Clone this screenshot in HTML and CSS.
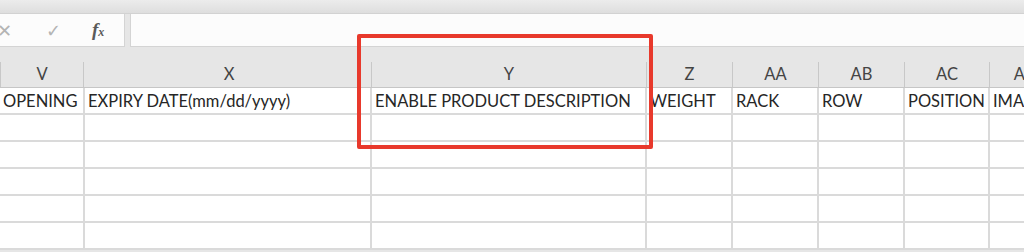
FILE: index.html
```html
<!DOCTYPE html>
<html lang="en">
<head>
    <meta charset="UTF-8">
    <title>Sheet</title>
    <link rel="stylesheet" href="styles.css">
</head>
<body>
    <div class="ribbon-edge"></div>

    <div class="formula-bar">
        <div class="fx-box">
            <span class="fx-icon cancel">&#x2715;</span>
            <span class="fx-icon enter">&#x2713;</span>
            <span class="fx-icon fx"><i>f</i><small>x</small></span>
        </div>
        <div class="fx-input"></div>
    </div>

    <div class="sheet">
        <div class="row head">
            <div class="cell c-v">V</div>
            <div class="cell c-x">X</div>
            <div class="cell c-y">Y</div>
            <div class="cell c-z">Z</div>
            <div class="cell c-aa">AA</div>
            <div class="cell c-ab">AB</div>
            <div class="cell c-ac">AC</div>
            <div class="cell c-ad">AD</div>
        </div>
        <div class="row">
            <div class="cell c-v">OPENING</div>
            <div class="cell c-x">EXPIRY DATE(mm/dd/yyyy)</div>
            <div class="cell c-y">ENABLE PRODUCT DESCRIPTION</div>
            <div class="cell c-z">WEIGHT</div>
            <div class="cell c-aa">RACK</div>
            <div class="cell c-ab">ROW</div>
            <div class="cell c-ac">POSITION</div>
            <div class="cell c-ad">IMAGE</div>
        </div>
        <div class="row"><div class="cell c-v"></div><div class="cell c-x"></div><div class="cell c-y"></div><div class="cell c-z"></div><div class="cell c-aa"></div><div class="cell c-ab"></div><div class="cell c-ac"></div><div class="cell c-ad"></div></div>
        <div class="row"><div class="cell c-v"></div><div class="cell c-x"></div><div class="cell c-y"></div><div class="cell c-z"></div><div class="cell c-aa"></div><div class="cell c-ab"></div><div class="cell c-ac"></div><div class="cell c-ad"></div></div>
        <div class="row"><div class="cell c-v"></div><div class="cell c-x"></div><div class="cell c-y"></div><div class="cell c-z"></div><div class="cell c-aa"></div><div class="cell c-ab"></div><div class="cell c-ac"></div><div class="cell c-ad"></div></div>
        <div class="row"><div class="cell c-v"></div><div class="cell c-x"></div><div class="cell c-y"></div><div class="cell c-z"></div><div class="cell c-aa"></div><div class="cell c-ab"></div><div class="cell c-ac"></div><div class="cell c-ad"></div></div>
        <div class="row"><div class="cell c-v"></div><div class="cell c-x"></div><div class="cell c-y"></div><div class="cell c-z"></div><div class="cell c-aa"></div><div class="cell c-ab"></div><div class="cell c-ac"></div><div class="cell c-ad"></div></div>
    </div>

    <!-- highlight around column Y -->
    <div class="highlight"></div>
</body>
</html>
```

FILE: styles.css
```css
* {
    margin: 0;
    padding: 0;
    box-sizing: border-box;
}

body {
    font-family: Lato, "Open Sans", sans-serif;
    background-color: #e6e6e6;
    width: 1024px;
    height: 252px;
    overflow: hidden;
    position: relative;
}

.ribbon-edge {
    height: 14px;
    background: linear-gradient(#ececec, #dedede);
    border-bottom: 1px solid #d2d2d2;
}

.formula-bar {
    display: flex;
    gap: 5px;
    height: 33px;
    background-color: #e6e6e6;
}

.fx-box {
    width: 125px;
    display: flex;
    align-items: center;
    background-color: #fcfcfc;
    border: 1px solid #d4d4d4;
    border-left: none;
    border-top: none;
}

.fx-icon {
    color: #b4b4b4;
    font-size: 18px;
}

.cancel {
    margin-left: -3px;
}

.enter {
    margin-left: 34px;
}

.fx {
    margin-left: 31px;
    color: #5a5a5a;
    font-family: "Liberation Serif", serif;
    font-size: 19px;
    font-weight: bold;
}

.fx small {
    font-size: 12px;
    font-style: italic;
}

.fx-input {
    flex: 1;
    background-color: #fcfcfc;
    border: 1px solid #d4d4d4;
    border-right: none;
    border-top: none;
}

.sheet {
    width: 1100px;
}

.row {
    display: flex;
    height: 27px;
    background-color: #fff;
    border-bottom: 2px solid #dadada;
}

.row .cell {
    flex-shrink: 0;
    border-right: 2px solid #dadada;
    font-size: 16.5px;
    line-height: 27px;
    color: #262626;
    padding-left: 3px;
    white-space: nowrap;
    overflow: hidden;
}

.row.head {
    height: 41px;
    background-color: #e6e6e6;
    border-bottom: 1px solid #c6c6c6;
    padding-top: 15px;
}

.row.head .cell {
    border-right: 1px solid #c8c8c8;
    text-align: center;
    line-height: 25px;
    color: #444;
    padding-left: 0;
}

.c-v { width: 85px; }
.c-x { width: 287px; }
.c-y { width: 275px; }
.c-z { width: 86px; }
.c-aa { width: 86px; }
.c-ab { width: 86px; }
.c-ac { width: 85px; }
.c-ad { width: 72px; }

.row.head .c-v {
    width: 84px;
    border-left: 1px solid #c8c8c8;
    margin-right: 3px;
}

.row.head .c-x { width: 285px; }

.highlight {
    position: absolute;
    left: 357px;
    top: 34px;
    width: 296px;
    height: 115px;
    border: 4px solid #e8392c;
    border-radius: 2px;
}
```
